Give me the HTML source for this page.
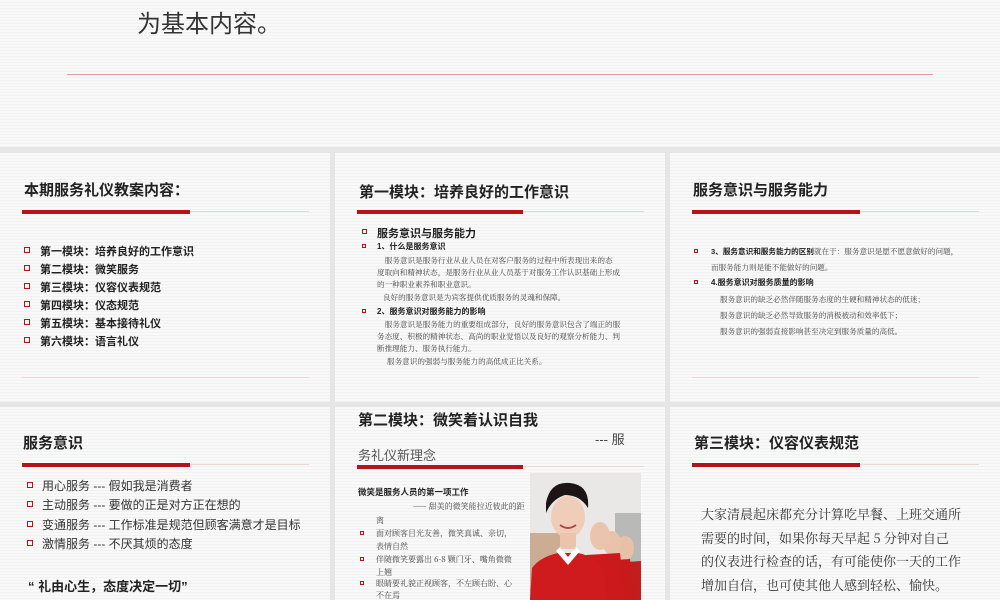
<!DOCTYPE html>
<html><head><meta charset="utf-8"><style>
*{margin:0;padding:0;box-sizing:border-box}
html{width:1000px;height:600px;overflow:hidden}
body{width:1000px;height:600px;overflow:hidden;background:#e6e6e6;font-family:"Liberation Sans","Noto Sans CJK SC",sans-serif;color:#222;position:relative}
.p{position:absolute;background:repeating-linear-gradient(180deg,#f9f9f9 0,#f9f9f9 2px,#f1f1f1 2px,#f1f1f1 3px)}
.t{position:absolute;white-space:nowrap}
.bar{position:absolute;height:4px;background:#b5121b}
.thin{position:absolute;height:1px;background:#ecd6d6}
.b{position:absolute;width:6px;height:6px;border:1px solid #b5121b}
.s{font-family:"Noto Serif CJK SC","Liberation Serif",serif;color:#444}
</style></head><body>
<div class="p" style="left:0;top:0;width:1000px;height:147px"></div>
<div class="t" style="left:137px;top:4px;font-size:24px;color:#333">为基本内容。</div>
<div style="position:absolute;left:67px;top:74px;width:866px;height:1px;background:#e49a9a"></div>

<div class="p" style="left:0;top:153px;width:330px;height:249px"></div>
<div class="p" style="left:335px;top:153px;width:330px;height:249px"></div>
<div class="p" style="left:670px;top:153px;width:330px;height:249px"></div>
<div class="p" style="left:0;top:407px;width:330px;height:193px"></div>
<div class="p" style="left:335px;top:407px;width:330px;height:193px"></div>
<div class="p" style="left:670px;top:407px;width:330px;height:193px"></div>

<!-- card1 -->
<div class="t" style="left:24px;top:179px;font-size:15px;font-weight:bold">本期服务礼仪教案内容：</div>
<div class="thin" style="left:22px;top:211px;width:287px"></div>
<div class="bar" style="left:22px;top:210px;width:168px"></div>
<div style="position:absolute;left:0;top:0;font-size:11px;font-weight:bold">
<div class="b" style="left:24px;top:247px"></div><div class="t" style="left:40px;top:243px">第一模块：培养良好的工作意识</div>
<div class="b" style="left:24px;top:265px"></div><div class="t" style="left:40px;top:261px">第二模块：微笑服务</div>
<div class="b" style="left:24px;top:283px"></div><div class="t" style="left:40px;top:279px">第三模块：仪容仪表规范</div>
<div class="b" style="left:24px;top:301px"></div><div class="t" style="left:40px;top:297px">第四模块：仪态规范</div>
<div class="b" style="left:24px;top:319px"></div><div class="t" style="left:40px;top:315px">第五模块：基本接待礼仪</div>
<div class="b" style="left:24px;top:337px"></div><div class="t" style="left:40px;top:333px">第六模块：语言礼仪</div>
</div>
<div class="thin" style="left:22px;top:377px;width:287px"></div>

<!-- card2 -->
<div class="t" style="left:359px;top:181px;font-size:15px;font-weight:bold">第一模块：培养良好的工作意识</div>
<div class="thin" style="left:357px;top:211px;width:287px"></div>
<div class="bar" style="left:357px;top:210px;width:166px"></div>
<div class="b" style="left:362px;top:229px;width:5px;height:5px"></div><div class="t" style="left:377px;top:225px;font-size:11px;font-weight:bold">服务意识与服务能力</div>
<div class="b" style="left:362px;top:244px;width:4px;height:4px"></div><div class="t" style="left:377px;top:241px;font-size:8px;font-weight:bold">1、什么是服务意识</div>
<div class="t s" style="left:377px;top:255px;font-size:7.6px;line-height:12.2px">&nbsp;&nbsp;&nbsp;&nbsp;服务意识是服务行业从业人员在对客户服务的过程中所表现出来的态<br>度取向和精神状态，是服务行业从业人员基于对服务工作认识基础上形成<br>的一种职业素养和职业意识。</div>
<div class="t s" style="left:383px;top:292px;font-size:7.6px">良好的服务意识是为宾客提供优质服务的灵魂和保障。</div>
<div class="b" style="left:362px;top:309px;width:4px;height:4px"></div><div class="t" style="left:377px;top:306px;font-size:8px;font-weight:bold">2、服务意识对服务能力的影响</div>
<div class="t s" style="left:377px;top:319px;font-size:7.6px;line-height:12.2px">&nbsp;&nbsp;&nbsp;&nbsp;服务意识是服务能力的重要组成部分，良好的服务意识包含了端正的服<br>务态度、积极的精神状态、高尚的职业觉悟以及良好的观察分析能力、判<br>断推理能力、服务执行能力。</div>
<div class="t s" style="left:387px;top:356px;font-size:7.6px">服务意识的强弱与服务能力的高低成正比关系。</div>

<!-- card3 -->
<div class="t" style="left:693px;top:179px;font-size:15px;font-weight:bold">服务意识与服务能力</div>
<div class="thin" style="left:692px;top:211px;width:287px"></div>
<div class="bar" style="left:692px;top:210px;width:168px"></div>
<div class="b" style="left:694px;top:249px;width:4px;height:4px"></div>
<div class="t s" style="left:711px;top:246px;font-size:7.6px"><b style="color:#222;font-family:'Liberation Sans','Noto Sans CJK SC',sans-serif">3、服务意识和服务能力的区别</b>就在于：服务意识是愿不愿意做好的问题，</div>
<div class="t s" style="left:711px;top:262px;font-size:7.6px">而服务能力则是能不能做好的问题。</div>
<div class="b" style="left:694px;top:280px;width:4px;height:4px"></div>
<div class="t" style="left:711px;top:277px;font-size:8px;font-weight:bold">4.服务意识对服务质量的影响</div>
<div class="t s" style="left:720px;top:294px;font-size:7.6px">服务意识的缺乏必然伴随服务态度的生硬和精神状态的低迷；</div>
<div class="t s" style="left:720px;top:310px;font-size:7.6px">服务意识的缺乏必然导致服务的消极被动和效率低下；</div>
<div class="t s" style="left:720px;top:326px;font-size:7.6px">服务意识的强弱直接影响甚至决定到服务质量的高低。</div>
<div class="thin" style="left:692px;top:377px;width:287px"></div>

<!-- card4 -->
<div class="t" style="left:23px;top:432px;font-size:15px;font-weight:bold">服务意识</div>
<div class="thin" style="left:22px;top:464px;width:287px"></div>
<div class="bar" style="left:22px;top:463px;width:168px"></div>
<div style="font-size:12px;color:#333">
<div class="b" style="left:27px;top:482px"></div><div class="t" style="left:42px;top:477px">用心服务 --- 假如我是消费者</div>
<div class="b" style="left:27px;top:501px"></div><div class="t" style="left:42px;top:496px">主动服务 --- 要做的正是对方正在想的</div>
<div class="b" style="left:27px;top:521px"></div><div class="t" style="left:42px;top:516px">变通服务 --- 工作标准是规范但顾客满意才是目标</div>
<div class="b" style="left:27px;top:540px"></div><div class="t" style="left:42px;top:535px">激情服务 --- 不厌其烦的态度</div>
</div>
<div class="t" style="left:28px;top:576px;font-size:13px;font-weight:bold">“ 礼由心生，态度决定一切”</div>

<!-- card5 -->
<div class="t" style="left:358px;top:409px;font-size:15px;font-weight:bold">第二模块：微笑着认识自我</div>
<div class="t" style="left:595px;top:429px;font-size:13px;color:#444">--- 服</div>
<div class="t" style="left:358px;top:445px;font-size:13px;color:#555">务礼仪新理念</div>
<div class="thin" style="left:357px;top:466px;width:287px"></div>
<div class="bar" style="left:357px;top:465px;width:166px"></div>
<div class="t" style="left:358px;top:486px;font-size:8.5px;font-weight:bold">微笑是服务人员的第一项工作</div>
<div class="t s" style="left:413px;top:501px;font-size:8px">—— 甜美的微笑能拉近彼此的距</div>
<div class="t s" style="left:376px;top:515px;font-size:8px">离</div>
<div class="b" style="left:360px;top:531px;width:4px;height:4px"></div>
<div class="t s" style="left:376px;top:528px;font-size:8px">面对顾客目光友善，微笑真诚、亲切，</div>
<div class="t s" style="left:376px;top:541px;font-size:8px">表情自然</div>
<div class="b" style="left:360px;top:557px;width:4px;height:4px"></div>
<div class="t s" style="left:376px;top:554px;font-size:8px">伴随微笑要露出 6-8 颗门牙、嘴角微微</div>
<div class="t s" style="left:376px;top:567px;font-size:8px">上翘</div>
<div class="b" style="left:360px;top:581px;width:4px;height:4px"></div>
<div class="t s" style="left:376px;top:578px;font-size:8px">眼睛要礼貌正视顾客，不左顾右盼、心</div>
<div class="t s" style="left:376px;top:590px;font-size:8px">不在焉</div>
<svg style="position:absolute;left:530px;top:473px" width="111" height="127" viewBox="0 0 111 127">
<rect width="111" height="127" fill="#e9e8e6"/>
<rect x="0" y="60" width="30" height="67" fill="#b9835a" opacity=".6"/>
<rect x="85" y="40" width="26" height="87" fill="#8a8a8a" opacity=".5"/>
<ellipse cx="95" cy="75" rx="9" ry="12" fill="#e8c0a8"/>
<path d="M82 90 L111 88 L111 127 L82 127Z" fill="#c31e1e"/>
<ellipse cx="82" cy="70" rx="9" ry="12" fill="#e9c2aa"/>
<path d="M70 88 L100 86 L104 127 L68 127Z" fill="#c8191b"/>
<ellipse cx="70" cy="63" rx="10" ry="14" fill="#ebc4ad"/>
<path d="M56 82 L90 80 L95 127 L54 127Z" fill="#cc1a1c"/>
<path d="M16 30 Q20 8 40 10 Q60 12 58 35 Q50 22 35 22 Q22 26 16 40Z" fill="#1d1515"/>
<ellipse cx="38" cy="44" rx="17" ry="21" fill="#f0cdb8"/>
<rect x="30" y="60" width="16" height="16" fill="#eac4ad"/>
<path d="M0 127 L2 95 Q10 84 28 80 L48 80 Q68 84 74 98 L78 127Z" fill="#cf1b1d"/>
<path d="M26 78 L38 92 L50 78 L46 74 L38 84 L30 74Z" fill="#fff"/>
<path d="M30 52 Q38 58 46 52" stroke="#b04848" stroke-width="2" fill="none"/>
</svg>

<!-- card6 -->
<div class="t" style="left:694px;top:432px;font-size:15px;font-weight:bold">第三模块：仪容仪表规范</div>
<div class="thin" style="left:692px;top:464px;width:287px"></div>
<div class="bar" style="left:692px;top:463px;width:168px"></div>
<div class="t s" style="left:701px;top:502px;font-size:13px;line-height:23.5px;color:#333">大家清晨起床都充分计算吃早餐、上班交通所<br>需要的时间，如果你每天早起 5 分钟对自己<br>的仪表进行检查的话，有可能使你一天的工作<br>增加自信，也可使其他人感到轻松、愉快。</div>
</body></html>
